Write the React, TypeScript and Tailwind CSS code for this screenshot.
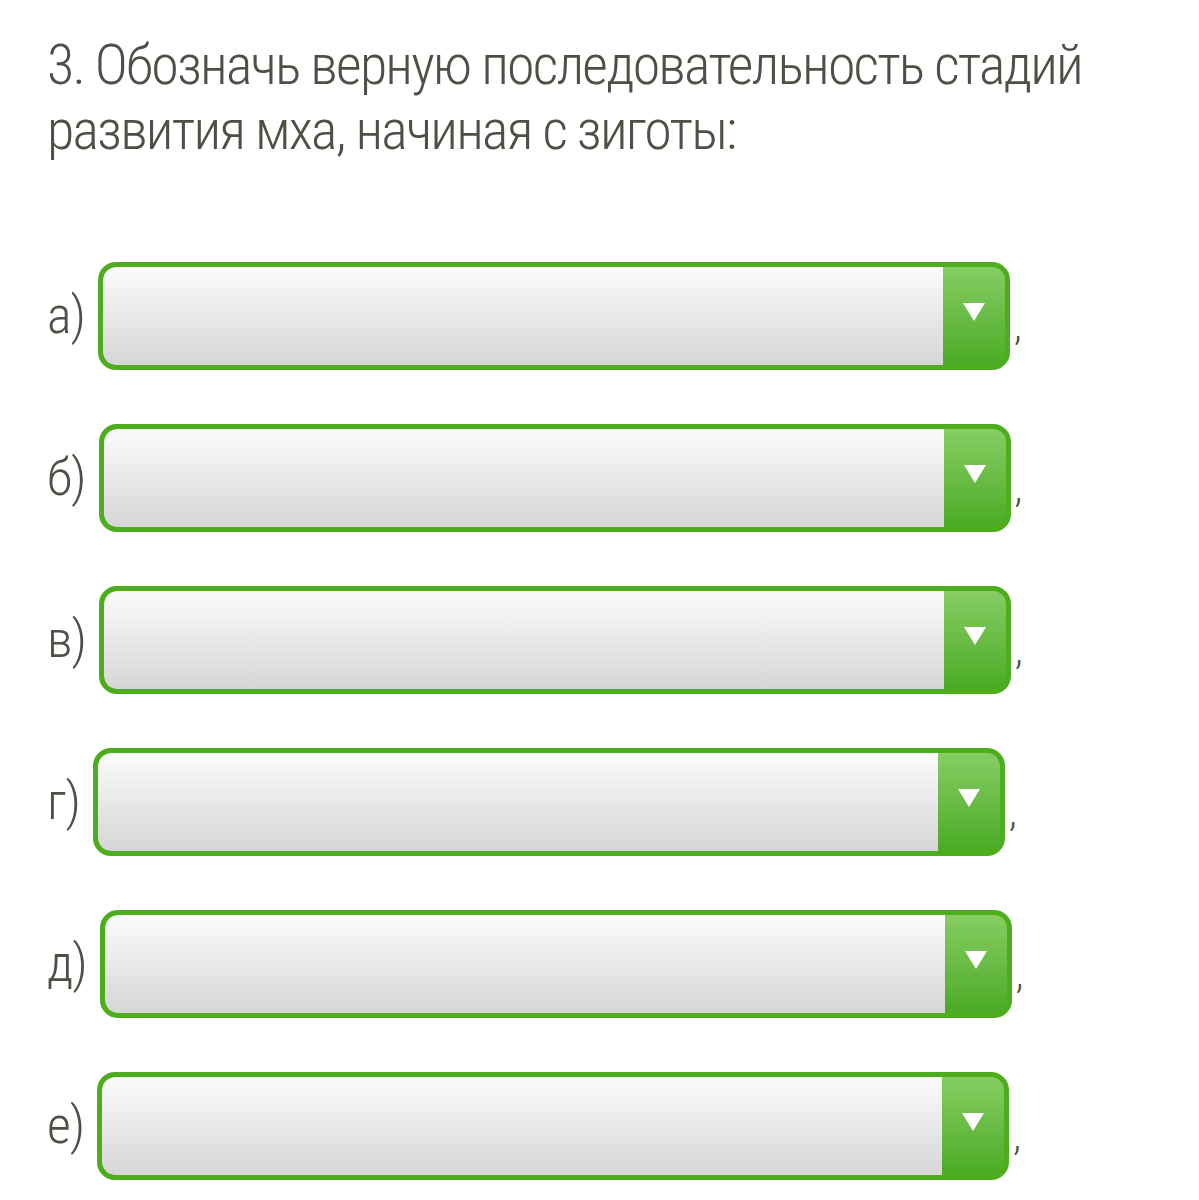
import { useState } from 'react'

const labels = ['а)', 'б)', 'в)', 'г)', 'д)', 'е)']

function Dropdown() {
  const [value] = useState('')
  return (
    <div className="flex h-[108px] w-[912px] overflow-hidden rounded-[18px] border-[5px] border-[#4dad1c] bg-[#4dad1c]">
      <div className="flex-1 rounded-l-[13px] bg-gradient-to-b from-[#fbfbfb] to-[#d6d6d6] px-4 text-[40px]">{value}</div>
      <div className="flex w-[62px] justify-center bg-gradient-to-b from-[#86cd62] to-[#4aab22] pt-[36px]">
        <svg width="22" height="18" viewBox="0 0 22 18">
          <path d="M0 0h22L11 18z" fill="#fff" />
        </svg>
      </div>
    </div>
  )
}

export default function App() {
  return (
    <div className="min-h-screen bg-white pl-[47px] pt-[33px] font-['Roboto_Condensed','Liberation_Sans_Narrow',Roboto,sans-serif] font-light text-[#4e4f45]">
      <h1 className="text-[56px] leading-[65px] tracking-[-1.8px]">
        3. Обозначь верную последовательность стадий
        <br />
        развития мха, начиная с зиготы:
      </h1>
      <div className="mt-[99px] flex flex-col gap-[54px]">
        {labels.map((l) => (
          <div key={l} className="flex items-center gap-[13px]">
            <span className="text-[52px] leading-none tracking-[-1px]">{l}</span>
            <Dropdown />
            <span className="mt-[22px] -ml-[9px] text-[40px] leading-none">,</span>
          </div>
        ))}
      </div>
    </div>
  )
}
